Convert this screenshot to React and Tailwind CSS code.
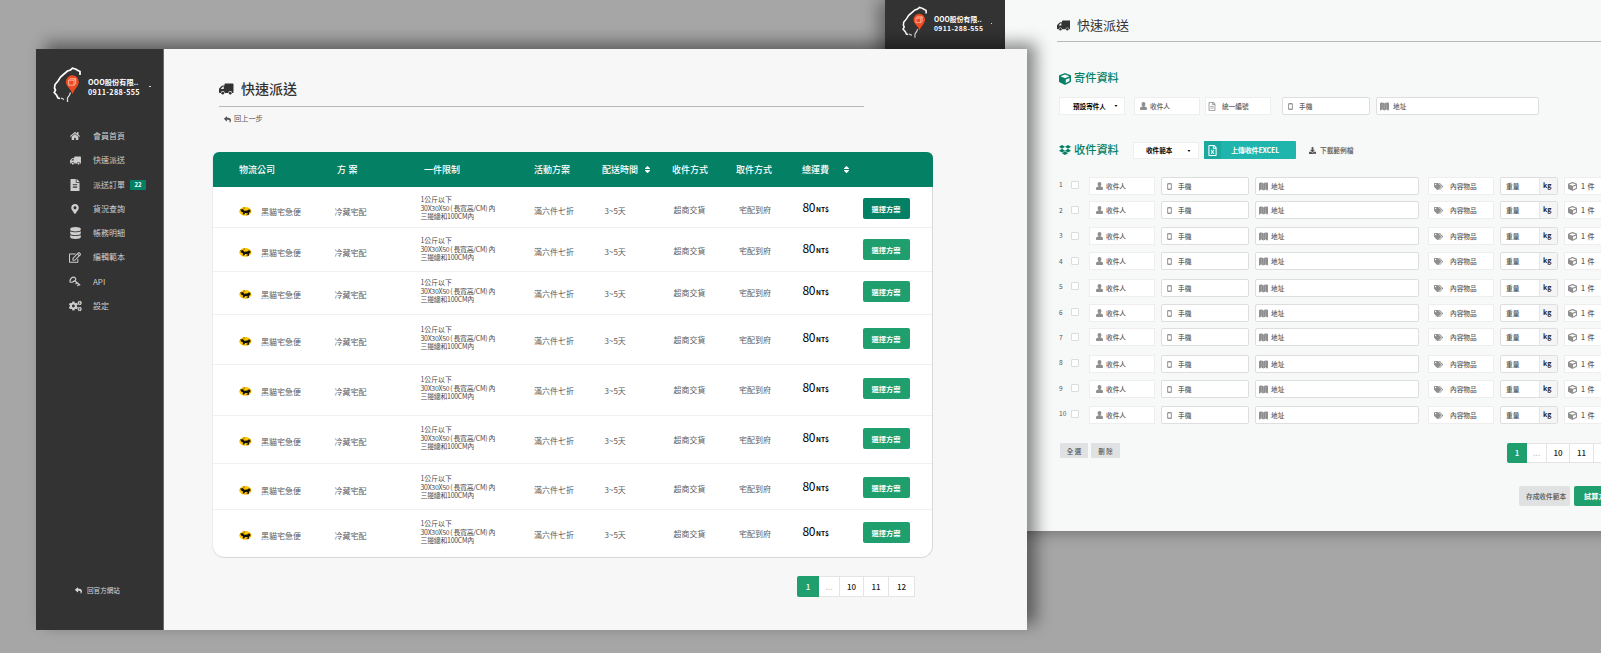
import React from "react";
import {
  FaHome, FaFileAlt, FaMapMarkerAlt, FaDatabase, FaRegEdit, FaCogs, FaReply,
  FaSort, FaCube, FaDropbox, FaTags, FaDownload, FaRegFileExcel, FaRegFileAlt,
} from "react-icons/fa";

const Truck = ({ className }) => (
  <svg viewBox="0 0 29 24" fill="currentColor" className={className}>
    <path fillRule="evenodd" d="M11 2.500Q11 1 12.500 1H27.500Q29 1 29 2.500V18.500Q29 20 27.500 20H26.300A3.800 3.800 0 0 0 18.700 20H11.300A3.800 3.800 0 0 0 3.700 20H1.500Q0 20 0 18.500V12.500Q0 11.500 .8 10.600L5.300 5.900Q6.200 5 7.400 5H11ZM7.800 7.200 3.800 11.400V12H9.500V7.200Z" />
    <circle cx="7.500" cy="20.300" r="2.700" />
    <circle cx="22.500" cy="20.300" r="2.700" />
  </svg>
);

const KeyIcon = ({ className }) => (
  <svg viewBox="0 0 22 20" fill="none" stroke="currentColor" strokeWidth="2.200" className={className}>
    <path d="M2 11 Q1 7 4.500 3.500 Q8 0.500 11 3 Q14 6 10.500 8.500 Q6 12.500 2 11 Z" />
    <path d="M10.500 8.500 L20.500 17 M14.500 12 L12 15 M18 15 L15.500 18.500" />
  </svg>
);

const Person = ({ className }) => (
  <svg viewBox="0 0 14 16" fill="currentColor" className={className}>
    <path d="M7 0a3.800 3.800 0 0 1 3.800 4c0 2-.8 3.200-1.800 4v1c3 .3 5 1.500 5 4v1.500c0 .9-.6 1.500-1.500 1.500h-11C.6 16 0 15.400 0 14.500V13c0-2.500 2-3.700 5-4V8C4 7.200 3.200 6 3.200 4A3.800 3.800 0 0 1 7 0z" />
  </svg>
);

const Phone = ({ className }) => (
  <svg viewBox="0 0 8 12" fill="none" stroke="currentColor" strokeWidth="1.600" className={className}>
    <rect x="0.800" y="0.800" width="6.400" height="10.400" rx="0.800" />
    <path d="M0.800 1.600h6.400M0.800 10.400h6.400" />
  </svg>
);

const MapIcon = ({ className }) => (
  <svg viewBox="0 0 18 18" fill="currentColor" className={className}>
    <path d="M0 2.500 4 .5v14.500L0 17.500zM4.300.5l4.600 2v14.500l-4.600-2zM9.200 2.500l4.200-2v14.500l-4.200 2zM13.700.5 16.500 2 18 .5V15l-1.500 2.500-2.800-2.500z" />
  </svg>
);

const Logo = ({ className }) => (
  <svg viewBox="0 0 28 35" fill="none" className={className}>
    <path d="M27 8V4.500L24.500 3.200 23 2.200 19.500 1.200 17.500 3 14.500 4 11 7 7.500 10 5 14 2 17.500 1.500 21 2.500 23 1.200 25.500 3.500 28 5 31 7 31.500" stroke="#fff" strokeWidth="1.700" />
    <path d="M8 31l3 1.500M14.500 35v-4l2-3 1-2.500" stroke="#ddd" strokeWidth="1.300" />
    <path d="M19.300 8.300a6.500 6.500 0 0 1 6.500 6.500c0 4.200-4.300 7.200-6.200 12.200-1.800-5-6.800-8-6.800-12.200a6.500 6.500 0 0 1 6.500-6.500z" fill="#f04a23" />
    <path d="M15.600 13.200h5.400v5h-5.400zM15.600 13.200l1.600-1.500h5.400v5l-1.600 1.500M21 13.200l1.600-1.500" stroke="#ffd9cf" strokeWidth=".7" />
  </svg>
);

const Cat = () => (
  <svg viewBox="0 0 36 26" className="h-[9px] w-[13px]">
    <ellipse cx="17.500" cy="12.500" rx="17.500" ry="12.500" fill="#ffc600" />
    <path d="M3 6l3 1 5-1 3 5 9-1 4-3 5 1v7l-4 1v6l-3 1-1-5-7-1-3 5H10l1-6-6-3z" fill="#111" />
    <path d="M12 3h4M21 22h5" stroke="#111" strokeWidth="2" />
  </svg>
);

const Account = ({ small }) => (
  <div className={small ? "flex h-[40px] items-start pl-[17px] pt-[6px]" : "flex h-[54px] items-start pl-[17px] pt-[18px]"}>
    <Logo className={small ? "h-[32px] w-[25px] shrink-0" : "h-[35px] w-[28px] shrink-0"} />
    <div className={small
      ? "ml-[7px] mt-[9px] w-[48px] shrink-0 whitespace-nowrap text-[6.800px] font-bold leading-[9px]"
      : "ml-[7px] mt-[10px] w-[51px] shrink-0 whitespace-nowrap text-[7.200px] font-bold leading-[10px]"}>
      <div className="tracking-[0.050px]">OOO股份有限..</div>
      <div className="tracking-[0.350px]">0911-288-555</div>
    </div>
    <div className={small ? "ml-[9px] mt-[17px] size-[1px] bg-gray-300" : "ml-[10px] mt-[19px] h-[1px] w-[2px] bg-gray-300"} />
  </div>
);

const menu = [
  { label: "會員首頁", Icon: FaHome, size: "h-[10px] w-[10px]" },
  { label: "快速派送", Icon: Truck, size: "h-[9px] w-[11px]" },
  { label: "派送訂單", Icon: FaFileAlt, size: "h-[12px] w-[10px]", badge: "22" },
  { label: "貨況查詢", Icon: FaMapMarkerAlt, size: "h-[10px] w-[8px]" },
  { label: "帳務明細", Icon: FaDatabase, size: "h-[12px] w-[11px]" },
  { label: "編輯範本", Icon: FaRegEdit, size: "h-[11px] w-[12px]" },
  { label: "API", Icon: KeyIcon, size: "h-[11px] w-[12px]" },
  { label: "設定", Icon: FaCogs, size: "h-[12px] w-[13px]" },
];

const Sidebar = () => (
  <aside className="flex w-[128px] shrink-0 flex-col border-r border-[#6b6b6b] bg-[#333] text-white">
    <Account />
    <nav className="mt-[21px] flex flex-col text-[8px] text-[#cfcfcf]">
      {menu.map(({ label, Icon, size, badge }) => (
        <div key={label} className="flex h-[24.250px] items-center pl-[31px]">
          <span className="flex w-[16px] justify-center"><Icon className={size} /></span>
          <span className="ml-[10px] w-[33px] whitespace-nowrap leading-none">{label}</span>
          {badge && (
            <span className="ml-[4px] flex h-[10px] w-[16px] items-center justify-center rounded-[1px] bg-[#048065] text-[6px] font-bold text-white">
              {badge}
            </span>
          )}
        </div>
      ))}
    </nav>
    <div className="mt-auto mb-[35px] flex h-[10px] items-center pl-[39px] text-[6.600px] leading-none text-[#d8d8d8]">
      <FaReply className="size-[7px]" />
      <span className="ml-[5px]">回官方網站</span>
    </div>
  </aside>
);

const cols = "grid grid-cols-[22px_73.500px_86px_113.500px_70.500px_69px_65.500px_63.500px_60px_47px] pl-[26px]";

const rows = [
  { h: "h-[41px]", pt: "pt-[11px]", active: true },
  { h: "h-[44px]", pt: "pt-[11px]" },
  { h: "h-[43px]", pt: "pt-[9px]" },
  { h: "h-[50px]", pt: "pt-[13px]" },
  { h: "h-[51px]", pt: "pt-[13px]" },
  { h: "h-[48px]", pt: "pt-[12px]" },
  { h: "h-[46px]", pt: "pt-[13px]" },
  { h: "h-[47px]", pt: "pt-[12px]" },
];

const PlanRow = ({ h, pt, active, last }) => (
  <div className={`${cols} ${h} ${pt} ${last ? "" : "border-b border-[#f0f0f0]"} items-start whitespace-nowrap text-[8px] leading-[22px] text-[#5c5c5c]`}>
    <span className="pt-[9px]"><Cat /></span>
    <span className="pt-[3px]">黑貓宅急便</span>
    <span className="pt-[3px]">冷藏宅配</span>
    <span className="-mt-[3px] text-[6.900px] leading-[8.500px] text-[#4a4a4a] [font-variant-ligatures:none] [font-feature-settings:'calt'_0]">
      1公斤以下<br />
      <span className="tracking-[-0.250px]">30X30X50<span className="mx-[1px]">(</span>長寬高/CM<span className="mr-[1px]">)</span>內</span><br />
      <span className="tracking-[-0.250px]">三邊總和100CM內</span>
    </span>
    <span className="pt-[2px]">滿六件七折</span>
    <span className="pt-[2px]">3~5天</span>
    <span className="pt-[1px]">超商交貨</span>
    <span className="pt-[1px]">宅配到府</span>
    <span className="-mt-[2px] text-[12px] text-black">
      <span className="tracking-[-0.400px]">80</span><span className="ml-[1px] text-[6.600px] font-bold">NT$</span>
    </span>
    <span className={`flex h-[21px] items-center justify-center rounded-[2px] text-[7.200px] font-bold text-white ${active ? "bg-[#048065]" : "bg-[#1f9e6e]"}`}>
      選擇方案
    </span>
  </div>
);

const Pager = ({ widths, className }) => (
  <div className={`flex overflow-hidden rounded-[2px] text-[8px] font-medium text-[#222] ${className}`}>
    {["1", "...", "10", "11", "12"].map((p, i) => (
      <span
        key={p}
        className={`flex shrink-0 items-center justify-center leading-none ${widths[i]} ${
          i === 0 ? "bg-[#1f9e6e] text-white" : "border-y border-r border-[#e4e4e4] bg-white"
        } ${i === 1 ? "text-[#bbb]" : ""}`}
      >
        {p}
      </span>
    ))}
  </div>
);

const FrontWindow = () => (
  <section className="absolute left-[36px] top-[49px] flex h-[581px] w-[991px] bg-[#f7f7f7] shadow-[9px_-6px_15px_rgba(0,0,0,0.450)]">
    <Sidebar />
    <main className="flex flex-1 flex-col pl-[49px]">
      <div className="ml-[6px] mt-[29px] flex h-[20px] items-center text-[#333]">
        <Truck className="mt-[2px] h-[12px] w-[14.500px]" />
        <span className="ml-[7.500px] text-[14px] font-medium leading-none">快速派送</span>
      </div>
      <div className="ml-[6px] mt-[8px] h-px w-[645px] bg-[#b8b8b8]" />
      <div className="ml-[11px] mt-[7px] flex h-[10px] items-center text-[7.200px] leading-none text-[#555]">
        <FaReply className="size-[7px]" />
        <span className="ml-[3px]">回上一步</span>
      </div>
      <div className="mt-[28px] w-[720px] rounded-b-[12px] rounded-t-[6px] border-b border-r border-[#d9d9d9] bg-white shadow-[-1px_0_0_#ececec]">
        <div className="-mr-px flex h-[35px] items-center rounded-t-[6px] bg-[#048065] pl-[26px] text-[9px] font-medium leading-none text-white">
          <span className="w-[98px]">物流公司</span>
          <span className="w-[87px] tracking-[0.200px]">方 案</span>
          <span className="w-[110px]">一件限制</span>
          <span className="w-[68px]">活動方案</span>
          <span className="flex w-[70px] items-center">配送時間<FaSort className="ml-[5px] size-[9px]" /></span>
          <span className="w-[64px]">收件方式</span>
          <span className="w-[66px]">取件方式</span>
          <span className="w-[40px]">總運費</span>
          <FaSort className="size-[9px]" />
        </div>
        {rows.map((r, i) => <PlanRow key={i} {...r} last={i === rows.length - 1} />)}
      </div>
      <Pager
        className="ml-[584px] mt-[18px] h-[21px]"
        widths={["w-[22px]", "w-[21px]", "w-[24px]", "w-[25px]", "w-[26px]"]}
      />
    </main>
  </section>
);

const Field = ({ Icon, size, label, w, pl, gap, strong }) => (
  <div className={`flex h-[18px] shrink-0 items-center whitespace-nowrap border bg-white text-[6.700px] font-medium leading-none text-[#5c5c5c] ${strong ? "rounded-[2px] border-[#dedede]" : "border-[#eee]"} ${w} ${pl}`}>
    <Icon className={`${size} shrink-0 text-[#8f8f8f]`} />
    <span className={gap}>{label}</span>
  </div>
);

const Caret = () => (
  <svg viewBox="0 0 6 4" className="h-[2px] w-[4px]"><path d="M0 0h6L3 4z" fill="#111" /></svg>
);

const fieldRows = [
  "mt-[0px]", "mt-[6px]", "mt-[8px]", "mt-[7px]", "mt-[9px]",
  "mt-[7px]", "mt-[6px]", "mt-[9px]", "mt-[7px]", "mt-[8px]",
];

const RecipientRow = ({ mt }) => (
  <div className={`flex ${mt}`}>
    <Field Icon={Person} size="h-[8px] w-[7px]" label="收件人" w="w-[66px]" pl="pl-[6px]" gap="ml-[3px]" />
    <div className="w-[6px] shrink-0" />
    <Field strong Icon={Phone} size="h-[7px] w-[5px]" label="手機" w="w-[88px]" pl="pl-[5px]" gap="ml-[6px]" />
    <div className="w-[6px] shrink-0" />
    <Field strong Icon={MapIcon} size="h-[9px] w-[9px]" label="地址" w="w-[164px]" pl="pl-[3px]" gap="ml-[3px]" />
    <div className="w-[9px] shrink-0" />
    <Field Icon={FaTags} size="h-[9px] w-[9px]" label="內容物品" w="w-[66px]" pl="pl-[5px]" gap="ml-[7px]" />
    <div className="w-[6px] shrink-0" />
    <div className="flex h-[18px] w-[58px] shrink-0 rounded-[2px] border border-[#dedede] bg-white text-[6.700px] font-medium leading-none text-[#555]">
      <span className="flex w-[38px] items-center pl-[5px]">重量</span>
      <span className="flex flex-1 items-center border-l border-[#e6e6e6] bg-[#f5f5f5] pb-[1px] pl-[3px] text-[7px] font-bold text-[#222]">kg</span>
    </div>
    <div className="w-[6px] shrink-0" />
    <Field Icon={FaCube} size="h-[9px] w-[9px]" label="1 件" w="w-[66px]" pl="pl-[3px]" gap="ml-[4px] text-[7px] tracking-[0.500px]" />
  </div>
);

const BackWindow = () => (
  <section className="absolute left-[885px] top-0 flex h-[531px] w-[900px] bg-[#f7f8f8] shadow-[-6px_0_16px_rgba(0,0,0,0.400)]">
    <aside className="w-[120px] shrink-0 bg-[#333] text-white">
      <Account small />
    </aside>
    <main className="flex flex-1 flex-col pl-[52px]">
      <div className="mt-[14px] flex h-[20px] items-center text-[#333]">
        <Truck className="mt-[2px] h-[11px] w-[13.300px]" />
        <span className="ml-[6.700px] text-[13px] leading-none">快速派送</span>
      </div>
      <div className="mt-[7px] h-px bg-[#b8b8b8]" />
      <div className="ml-[2px] mt-[28px] flex h-[16px] items-center text-[11.200px] font-medium leading-none text-[#048065]">
        <FaCube className="mt-[2px] size-[12px]" />
        <span className="ml-[3px]">寄件資料</span>
      </div>
      <div className="ml-[2px] mt-[11px] flex items-start">
        <div className="flex h-[18px] w-[66px] items-center border border-[#eee] bg-white pl-[13px] text-[6.600px] font-bold leading-none text-black">
          <span className="w-[41px]">預設寄件人</span><Caret />
        </div>
        <div className="w-[9px]" />
        <Field Icon={Person} size="h-[8px] w-[7px]" label="收件人" w="w-[66px]" pl="pl-[5px]" gap="ml-[3px]" />
        <div className="w-[5px]" />
        <Field Icon={FaRegFileAlt} size="h-[9px] w-[8px]" label="統一編號" w="w-[66px]" pl="pl-[2px]" gap="ml-[6px]" />
        <div className="w-[11px]" />
        <Field strong Icon={Phone} size="h-[7px] w-[5px]" label="手機" w="w-[88px]" pl="pl-[5px]" gap="ml-[6px]" />
        <div className="w-[6px]" />
        <Field strong Icon={MapIcon} size="h-[9px] w-[9px]" label="地址" w="w-[163px]" pl="pl-[3px]" gap="ml-[4px]" />
      </div>
      <div className="ml-[2px] mt-[26px] flex h-[18px] items-center leading-none">
        <FaDropbox className="size-[12px] text-[#048065]" />
        <span className="ml-[3px] w-[59px] text-[11.200px] font-medium text-[#048065]">收件資料</span>
        <div className="mt-px flex h-[17px] w-[66px] items-center border border-[#eee] bg-white pl-[12px] text-[6.600px] font-bold text-black">
          <span className="w-[41px]">收件範本</span><Caret />
        </div>
        <div className="ml-[5px] flex h-[18px] w-[92px] overflow-hidden rounded-[1px] bg-[#1fb5ac] text-[7px] font-bold text-white">
          <span className="flex w-[17px] items-center justify-center bg-[#1ba89f]"><FaRegFileExcel className="h-[11px] w-[9px]" /></span>
          <span className="flex flex-1 items-center pl-[10px] tracking-[-0.150px]">上傳收件EXCEL</span>
        </div>
        <FaDownload className="ml-[13px] mt-px size-[7px] text-[#555]" />
        <span className="ml-[4px] mt-px text-[6.700px] font-medium text-[#555]">下載範例檔</span>
      </div>
      <div className="ml-[2px] mt-[18px] flex">
        <div className="-mt-[5px] flex w-[30px] flex-col text-[6.600px] leading-none text-[#555]">
          {fieldRows.map((_, i) => (
            <div key={i} className="flex h-[25.450px] items-center">
              <span className="w-[12px]">{i + 1}</span>
              <span className="size-[8px] rounded-[1px] border border-[#dcdcdc] bg-white" />
            </div>
          ))}
        </div>
        <div className="flex flex-col">
          {fieldRows.map((mt, i) => <RecipientRow key={i} mt={mt} />)}
        </div>
      </div>
      <div className="ml-[3px] mt-[17px] flex h-[20px] items-start text-[6.500px] font-medium leading-none text-[#555]">
        <span className="flex h-[15px] w-[28px] items-center justify-center rounded-[1px] bg-[#e0e1e2]">全 選</span>
        <span className="ml-[3px] flex h-[15px] w-[29px] items-center justify-center rounded-[1px] bg-[#e0e1e2]">刪 除</span>
        <Pager
          className="ml-[387px] h-[20px]"
          widths={["w-[20px]", "w-[20px]", "w-[23px]", "w-[24px]", "w-[26px]"]}
        />
      </div>
      <div className="ml-[462px] mt-[23px] flex h-[20px] text-[6.700px] font-medium leading-none text-[#555]">
        <span className="flex w-[51px] items-center rounded-[2px] bg-[#e0e1e2] pl-[7px]">存成收件範本</span>
        <span className="ml-[4px] flex w-[51px] items-center rounded-[2px] bg-[#1f9e6e] pl-[10px] text-[7.200px] font-bold text-white">試算方案</span>
      </div>
    </main>
  </section>
);

export default function App() {
  return (
    <div className="relative h-[653px] w-[1601px] overflow-hidden bg-[#a6a6a6] font-['Noto_Sans_CJK_TC','Noto_Sans',sans-serif]">
      <BackWindow />
      <FrontWindow />
    </div>
  );
}
